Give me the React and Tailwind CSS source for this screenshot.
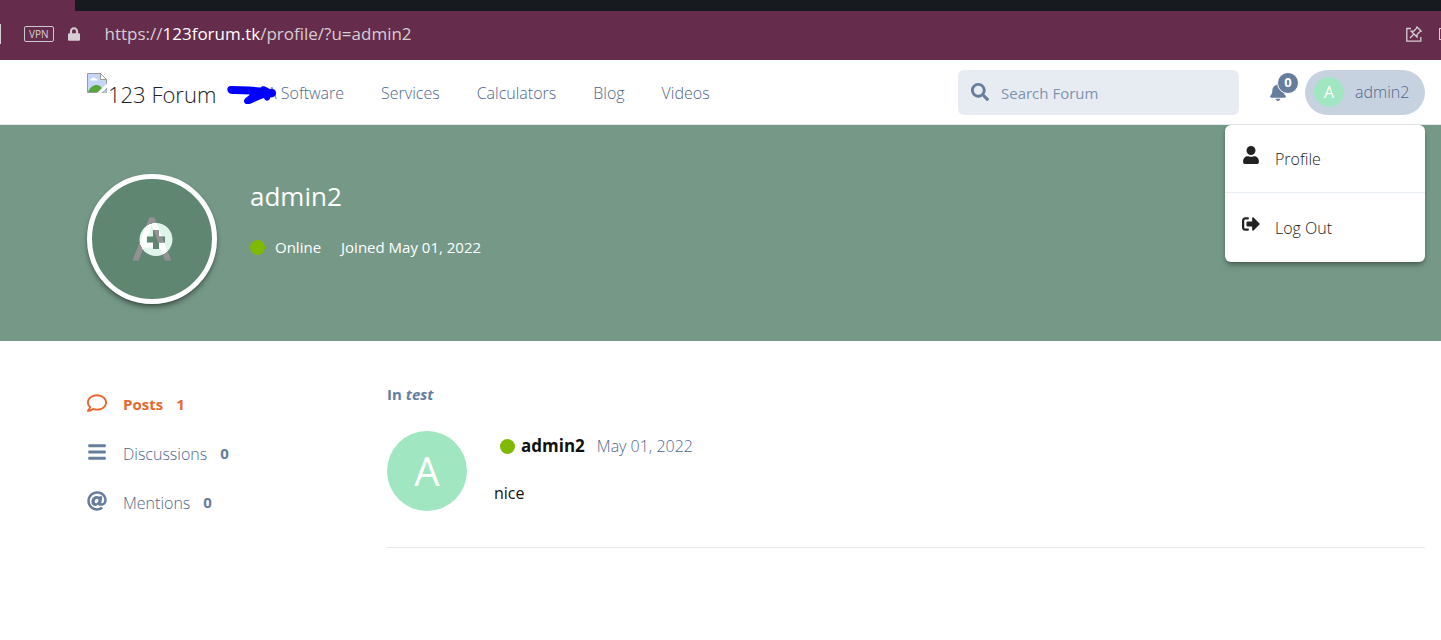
import {
  FaAt,
  FaBars,
  FaBell,
  FaLock,
  FaRegComment,
  FaSearch,
  FaSignOutAlt,
  FaUser,
} from "react-icons/fa";

const navLinks = ["A Software", "Services", "Calculators", "Blog", "Videos"];

const profileTabs = [
  { name: "Posts", count: 1, icon: FaRegComment, active: true },
  { name: "Discussions", count: 0, icon: FaBars },
  { name: "Mentions", count: 0, icon: FaAt },
];

const BrokenImage = () => (
  <svg className="mt-[13px] size-5 shrink-0" viewBox="0 0 20 20" aria-hidden="true">
    <path d="M.5.5h13l6 6v13H.5z" fill="#c5d6f7" stroke="#9a9a9a" />
    <path d="M13.5.5v6h6z" fill="#fff" stroke="#9a9a9a" />
    <path d="M3 7.500c0-1.500 1-2 2-1.800.5-1.700 3-1.700 3.500 0 1.500 0 2 .8 2 1.800z" fill="#fff" />
    <path d="M1 19c2-5 6-7.500 9.500-7 2 .3 3.500 2 4.500 3.500L11 19z" fill="#57a639" />
    <path d="M10 20 20 10.500v4L14.500 20z" fill="#fff" />
    <path d="M15 20h5v-4z" fill="#c5d6f7" stroke="#9a9a9a" strokeWidth=".8" />
  </svg>
);

const Scribble = () => (
  <svg
    className="pointer-events-none absolute top-[25px] -left-10 h-5 w-[50px]"
    viewBox="0 0 50 20"
    aria-hidden="true"
  >
    <path
      d="M4 1C1 1 0 3 .5 5.500 1 8.500 4 9 8 9l15 .5c-2 2-6 4-6 6.500 0 3.500 4 3.500 7 2.500 5-2 8-4 13-5.500 1 2.500 3 3.500 5 2 1-1 1-1.500 1-2.500 3 0 6-1 6-4.500 0-2-1-4-4-4-2 0-3-.5-5-1.500-3-2-5-1.500-6.500 0L22 1.500z"
      fill="#0000fe"
    />
  </svg>
);

const BrowserBar = () => (
  <div className="bg-[#662c4b]">
    <div className="ml-[75px] h-[11px] bg-[#171a1e]" />
    <div className="flex h-[49px] items-center overflow-hidden pb-1 text-[#d5ced3]">
      <span className="h-5 w-px bg-[#d5ced3]" />
      <span className="ml-[23px] rounded-[2px] border border-[#c9c9cf] px-1 text-[10px] leading-[14px]">
        VPN
      </span>
      <FaLock className="ml-[14px] h-4 w-3" />
      <p className="ml-[25px] text-[17px]">
        https://<span className="text-white">123forum.tk</span>/profile/?u=admin2
      </p>
      <button type="button" aria-label="Pin page" className="ml-auto">
        <svg
          className="size-4"
          viewBox="0 0 16 16"
          fill="none"
          stroke="currentColor"
          strokeWidth="1.300"
        >
          <path d="M5 2.500H.8v12.700h14V11" />
          <path d="m11 1 4.200 4.200-1.700.8-2.300 2.300-.2 2.700L5.200 5.200l2.700-.2L10.200 2.700zM8 8l-4 4" />
        </svg>
      </button>
      <span className="ml-[17px] h-3 w-[2px] border border-r-0 border-current" />
    </div>
  </div>
);

const UserMenu = () => (
  <div className="absolute top-[65px] right-4 z-10 w-[200px] rounded-md bg-white text-base font-light text-[#222] shadow-md shadow-black/30">
    <a href="#profile" className="flex h-[68px] items-center border-b border-[#e7edf3] pl-[17px]">
      <FaUser className="mb-2 size-[18px]" />
      <span className="ml-[15px]">Profile</span>
    </a>
    <a href="#logout" className="flex h-[69px] items-center pl-[17px]">
      <FaSignOutAlt className="mb-2 size-[18px]" />
      <span className="ml-[15px]">Log Out</span>
    </a>
  </div>
);

const Header = () => (
  <header className="relative flex h-[65px] border-b border-[#e2e7ee] bg-white pr-4 pl-[87px] text-[#667d9d]">
    <a href="#home" className="flex w-[180px] text-[#222]">
      <BrokenImage />
      <span className="mt-[17px] ml-px text-[22px] leading-[34px] font-light whitespace-nowrap">
        123 Forum
      </span>
    </a>
    <nav className="relative flex items-center gap-[37px] pt-px text-base font-light whitespace-nowrap text-[#4f688c]">
      {navLinks.map((name) => (
        <a key={name} href={`#${name.replace(" ", "-")}`}>
          {name}
        </a>
      ))}
      <Scribble />
    </nav>
    <div className="ml-auto flex items-center">
      <label className="flex h-[45px] w-[281px] items-center rounded-md bg-[#e7ecf3] pl-[13px]">
        <FaSearch className="size-[18px]" />
        <input
          type="search"
          aria-label="Search Forum"
          placeholder="Search Forum"
          className="ml-3 w-[200px] pt-[2px] text-[15px] outline-none placeholder:text-[#7f93b0]"
        />
      </label>
      <button type="button" aria-label="Notifications" className="relative ml-[30px]">
        <FaBell className="size-[18px]" />
        <span className="absolute -top-[11px] left-2 flex size-[22px] items-center justify-center rounded-full border border-white bg-[#667d9d] text-[13px] font-bold text-white">
          0
        </span>
      </button>
      <button
        type="button"
        className="ml-[18px] flex h-[45px] w-[120px] items-center rounded-full bg-[#c7d2e1] pl-[9px] text-base font-light text-[#4f688c]"
      >
        <span className="flex size-[30px] items-center justify-center rounded-full bg-[#a0e6c0] font-normal text-white">
          A
        </span>
        <span className="ml-[11px]">admin2</span>
      </button>
    </div>
    <UserMenu />
  </header>
);

const plusPath = "M66 56h6v6.500h6v6h-6V75h-6v-6.500h-6v-6h6z";

// Dimmed avatar with the upload badge over its letter
const UploadAvatar = () => (
  <button
    type="button"
    aria-label="Upload avatar"
    className="size-[130px] shrink-0 rounded-full shadow-md shadow-black/40"
  >
    <svg viewBox="0 0 130 130" className="size-full">
      <defs>
        <radialGradient id="letter" gradientUnits="userSpaceOnUse" cx="69" cy="65.500" r="16.500">
          <stop offset="0.990" stopColor="#fff" />
          <stop offset="1" stopColor="#929292" />
        </radialGradient>
        <clipPath id="plus">
          <path d={plusPath} />
        </clipPath>
      </defs>
      <circle cx="65" cy="65" r="62.500" fill="#5e8671" stroke="#fff" strokeWidth="5" />
      <circle cx="69" cy="65.500" r="16.500" fill="#e0f5ea" />
      <text
        x="65"
        y="86"
        fontSize="59"
        textAnchor="middle"
        fill="url(#letter)"
        stroke="url(#letter)"
        strokeWidth="1"
      >
        A
      </text>
      <path d={plusPath} fill="#5e8671" />
      <path d="M62 44h6l16 42h-6z" fill="#929292" clipPath="url(#plus)" />
    </svg>
  </button>
);

const Hero = () => (
  <section className="flex h-[216px] bg-[#769987] pt-[49px] pl-[87px] text-white">
    <UploadAvatar />
    <div className="ml-[33px]">
      <h1 className="text-[26px] leading-[44px]">admin2</h1>
      <div className="mt-[19px] flex items-center text-[15px] leading-5">
        <span className="size-[15px] rounded-full bg-[#7fba00]" />
        <span className="ml-[10px]">Online</span>
        <span className="ml-5">Joined May 01, 2022</span>
      </div>
    </div>
  </section>
);

const Sidebar = () => (
  <nav className="flex w-[300px] shrink-0 flex-col gap-6 pt-[51px] text-base font-light text-[#4f688c]">
    {profileTabs.map(({ name, count, icon: Icon, active }) => (
      <a
        key={name}
        href={`#${name}`}
        className={`flex h-[25px] items-center ${
          active ? "text-[15px] font-bold text-[#e7672e]" : ""
        }`}
      >
        <Icon className={`mb-1 h-5 w-auto ${active ? "" : "text-[#667d9d]"}`} />
        <span className="ml-4">{name}</span>
        <span className={`ml-[13px] text-[15px] font-bold ${active ? "" : "text-[#667d9d]"}`}>
          {count}
        </span>
      </a>
    ))}
  </nav>
);

const Post = () => (
  <article className="grow pt-[41px]">
    <h2 className="text-[15px] leading-6 font-bold text-[#667d9d]">
      In <em>test</em>
    </h2>
    <div className="mt-[25px] flex border-b border-[#e8e8e8] pb-9">
      <div className="flex size-20 items-center justify-center rounded-full bg-[#a0e6c0] text-[40px] text-white">
        A
      </div>
      <div className="ml-[27px]">
        <div className="flex items-center pl-[6px] leading-[30px]">
          <span className="size-[15px] rounded-full bg-[#7fba00]" />
          <b className="ml-[6px] text-[17px] text-[#111]">admin2</b>
          <time className="ml-3 text-base font-light text-[#4f688c]">May 01, 2022</time>
        </div>
        <p className="mt-5 text-base text-[#111]">nice</p>
      </div>
    </div>
  </article>
);

const App = () => {
  return (
    <div className="min-h-screen bg-white font-['Open_Sans',sans-serif]">
      <BrowserBar />
      <Header />
      <Hero />
      <main className="flex pr-4 pl-[87px]">
        <Sidebar />
        <Post />
      </main>
    </div>
  );
};

export default App;
